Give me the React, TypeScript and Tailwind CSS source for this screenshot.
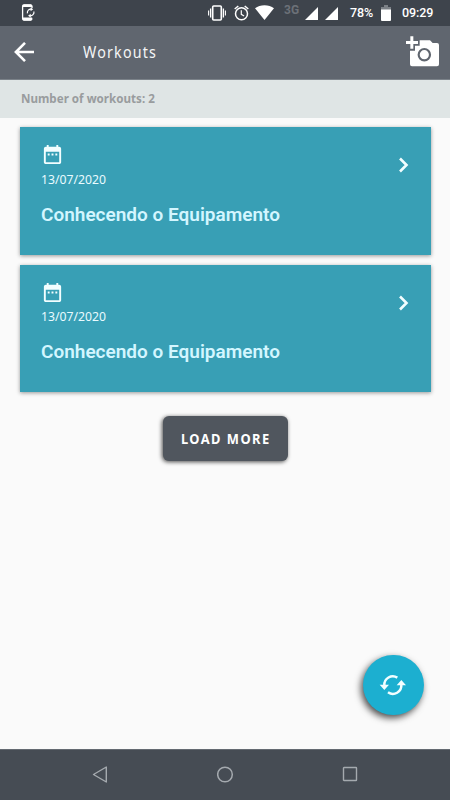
import React from 'react';

const workouts = [
  { id: 1, date: '13/07/2020', title: 'Conhecendo o Equipamento' },
  { id: 2, date: '13/07/2020', title: 'Conhecendo o Equipamento' },
];

const SignalIcon = ({ className }: { className: string }) => (
  <svg className={className} viewBox="0 0 13 13" fill="#fff">
    <path d="M13 0v13H0z" />
  </svg>
);

const StatusBar = () => (
  <div className="flex h-[26px] shrink-0 items-center bg-[#3e444c] pl-[21px] text-white">
    {/* phone sync */}
    <svg className="-mt-px h-[17px] w-[14px]" viewBox="0 0 14 17" fill="none">
      <path d="M11 4V2.4Q11 1 9.600 1H3Q1.600 1 1.600 2.400v12.200Q1.600 16 3 16h6.600Q11 16 11 14.600" stroke="#fff" strokeWidth="1.300" />
      <path d="M1.500 13.500h9.600v1.500q0 1.500-1.500 1.500H3q-1.500 0-1.500-1.500zM1.500 2q0-1.500 1.500-1.500h6.600q1.500 0 1.500 1.500v1H1.500z" fill="#fff" />
      <path d="M6.400 9.300a3.600 3.600 0 0 1 4-4.200M12.900 7.500a3.600 3.600 0 0 1-4 4.300" stroke="#fff" strokeWidth="1.200" />
      <path d="M9.600 3.400l2.600 1.900-2.600 1.900zM9.700 9.800v3.800L7 11.700z" fill="#fff" />
    </svg>
    {/* vibrate */}
    <svg className="ml-[173px] h-4 w-[18px]" viewBox="0 0 18 16" fill="none" stroke="#fff">
      <rect x="4.700" y="1" width="8.600" height="14" rx="1" strokeWidth="1.600" />
      <path d="M2.600 3.500v9M15.400 3.500v9" strokeWidth="1.300" />
      <path d="M.6 5.500v5M17.400 5.500v5" strokeWidth="1.100" />
    </svg>
    {/* alarm */}
    <svg className="ml-[7.500px] h-4 w-[15px]" viewBox="0 0 15 16" fill="none" stroke="#fff">
      <circle cx="7.500" cy="8.800" r="6" strokeWidth="1.500" />
      <path d="M7.300 5.300v4l2.800 1.600" strokeWidth="1.200" />
      <path d="M.7 4L4.300 1M14.300 4l-3.600-3" strokeWidth="1.500" />
    </svg>
    {/* wifi */}
    <svg className="-mt-px ml-[6px] h-[15px] w-[19px]" viewBox="0 0 19 15" fill="#fff">
      <path d="M9.500 15L0 3.300Q4 .3 9.500.3T19 3.300z" />
    </svg>
    <span className="mb-[6px] ml-[10.500px] w-[16px] font-['Roboto',sans-serif] text-[12px] leading-none font-bold text-[#6c7178]">3G</span>
    <SignalIcon className="ml-[5px] h-[13px] w-[13px]" />
    <SignalIcon className="ml-[7px] h-[13px] w-[13px]" />
    <span className="ml-[12px] w-[31px] font-['Roboto',sans-serif] text-[12.500px] leading-none font-medium tracking-[-0.100px] whitespace-nowrap">78%</span>
    {/* battery */}
    <svg className="h-[16px] w-[10px]" viewBox="0 0 10 16">
      <path d="M3 0h4v2h3v3H0V2h3z" fill="#7b8086" />
      <path d="M0 4.500h10V15q0 1-1 1H1q-1 0-1-1z" fill="#fff" />
    </svg>
    <span className="ml-[11px] font-['Roboto',sans-serif] text-[12.500px] leading-none font-medium tracking-[-0.100px]">09:29</span>
  </div>
);

const Header = () => (
  <header className="flex h-[54px] shrink-0 items-center border-b border-[#7b8289] bg-[#60666f] pr-[11px] pl-[14px]">
    <button className="-mt-[2px]" aria-label="Back">
      <svg className="block h-5 w-5" viewBox="0 0 20 20" fill="none" stroke="#fff" strokeWidth="2.600">
        <path d="M20 10H2M11 .9L1.900 10l9.100 9.100" />
      </svg>
    </button>
    <h1 className="mt-px ml-[49px] origin-left scale-x-[0.920] font-['Noto_Sans',sans-serif] text-[15.500px] tracking-[1.300px] text-[#f4f5f6]">Workouts</h1>
    <button className="-mt-[3px] ml-auto" aria-label="Add photo">
      <svg className="block h-[31px] w-[33px]" viewBox="50 32 99 93">
        <path d="M68 53h10l8-8h36l8 8h13q6 0 6 6v58q0 6-6 6H68q-6 0-6-6V59q0-6 6-6z" fill="#fff" />
        <path d="M45 43h14V28h18v15h14v18H77v15H59V61H45z" fill="#60666f" />
        <path d="M50 47h13V33h9v14h14v9H72v14h-9V56H50z" fill="#fff" />
        <circle cx="105" cy="88" r="17" fill="none" stroke="#60666f" strokeWidth="6.500" />
      </svg>
    </button>
  </header>
);

const WorkoutCard = ({ date, title }: { date: string; title: string }) => (
  <div className="flex h-[127.500px] justify-between bg-[#389fb5] pt-[16px] pr-[21px] pl-[21px] shadow-[0_1px_4px_rgba(0,0,0,0.4)]">
    <div>
      <svg className="block h-[23px] w-[23px]" viewBox="0 0 24 24" fill="#f2feff">
        <path d="M9 11H7v2h2v-2zm4 0h-2v2h2v-2zm4 0h-2v2h2v-2zm2-7h-1V2h-2v2H8V2H6v2H5c-1.110 0-1.990.9-1.990 2L3 20c0 1.100.89 2 2 2h14c1.100 0 2-.9 2-2V6c0-1.100-.9-2-2-2zm0 16H5V9h14v11z" />
      </svg>
      <p className="mt-[3.500px] w-max origin-left scale-x-[0.940] font-['Noto_Sans',sans-serif] text-[13px] leading-[18px] text-[#e9fbff]">{date}</p>
      <h2 className="mt-[15px] font-['Roboto',sans-serif] text-[19px] leading-6 font-semibold whitespace-nowrap text-[#d3f6ff]">{title}</h2>
    </div>
    <svg className="mt-[14px] h-4 w-[13px]" viewBox="0 0 13 16" fill="none" stroke="#f2feff" strokeWidth="2.600">
      <path d="M3 1.500L9.500 8 3 14.500" />
    </svg>
  </div>
);

const NavigationBar = () => (
  <nav className="flex h-[51px] shrink-0 items-center justify-between border-t border-[#646a71] bg-[#464c54] pr-[92px] pb-[2px] pl-[92px]">
    <svg className="h-[17px] w-4" viewBox="0 0 16 17" fill="none" stroke="#a5aaaf" strokeWidth="1.400" strokeLinejoin="round">
      <path d="M14.300 1v15L1.500 8.500z" />
    </svg>
    <svg className="h-[17px] w-[17px]" viewBox="0 0 17 17" fill="none" stroke="#a5aaaf" strokeWidth="1.500">
      <circle cx="8" cy="8.500" r="7.300" />
    </svg>
    <svg className="h-4 w-4" viewBox="0 0 16 16" fill="none" stroke="#a5aaaf" strokeWidth="1.400">
      <rect x="1.500" y="1.500" width="13" height="13" rx=".5" />
    </svg>
  </nav>
);

const App = () => {
  return (
    <div className="relative flex h-[800px] w-[450px] flex-col overflow-hidden bg-[#fafafa]">
      <StatusBar />
      <Header />
      <div className="flex h-[38px] shrink-0 items-center bg-[#dfe5e5] pt-px pl-[21px]">
        <span className="origin-left scale-x-[0.930] font-['Noto_Sans',sans-serif] text-[12.500px] font-bold text-[#999c9e]">Number of workouts: 2</span>
      </div>

      <main className="flex-1 pt-[9px] pr-[19px] pl-[20px]">
        <div className="flex flex-col gap-[10px]">
          {workouts.map((workout) => (
            <WorkoutCard key={workout.id} date={workout.date} title={workout.title} />
          ))}
        </div>
        <div className="mt-[24px] flex justify-center">
          <button className="flex h-[45px] w-[125px] items-center justify-center rounded-[6px] bg-[#50565e] text-white shadow-[-1px_1px_4px_rgba(0,0,0,0.7)]">
            <span className="scale-x-[0.920] font-['Noto_Sans',sans-serif] text-[14px] font-bold tracking-[1.600px] whitespace-nowrap">LOAD MORE</span>
          </button>
        </div>
      </main>

      <button
        aria-label="Refresh"
        className="absolute top-[655px] left-[363px] flex h-[60px] w-[61px] items-center justify-center rounded-full bg-[#1cafd0] pr-[2px] shadow-[-2px_3px_7px_rgba(0,0,0,0.7)]"
      >
        <svg className="h-7 w-7" viewBox="88 93 84 84" fill="none">
          <path d="M104 136a25.500 25.500 0 0 1 39-23M155 134a25.500 25.500 0 0 1-40 23" stroke="#f2feff" strokeWidth="7.500" />
          <path d="M90 134h28l-14 16zM141 136h28l-14-16z" fill="#f2feff" />
        </svg>
      </button>

      <NavigationBar />
    </div>
  );
};

export default App;
